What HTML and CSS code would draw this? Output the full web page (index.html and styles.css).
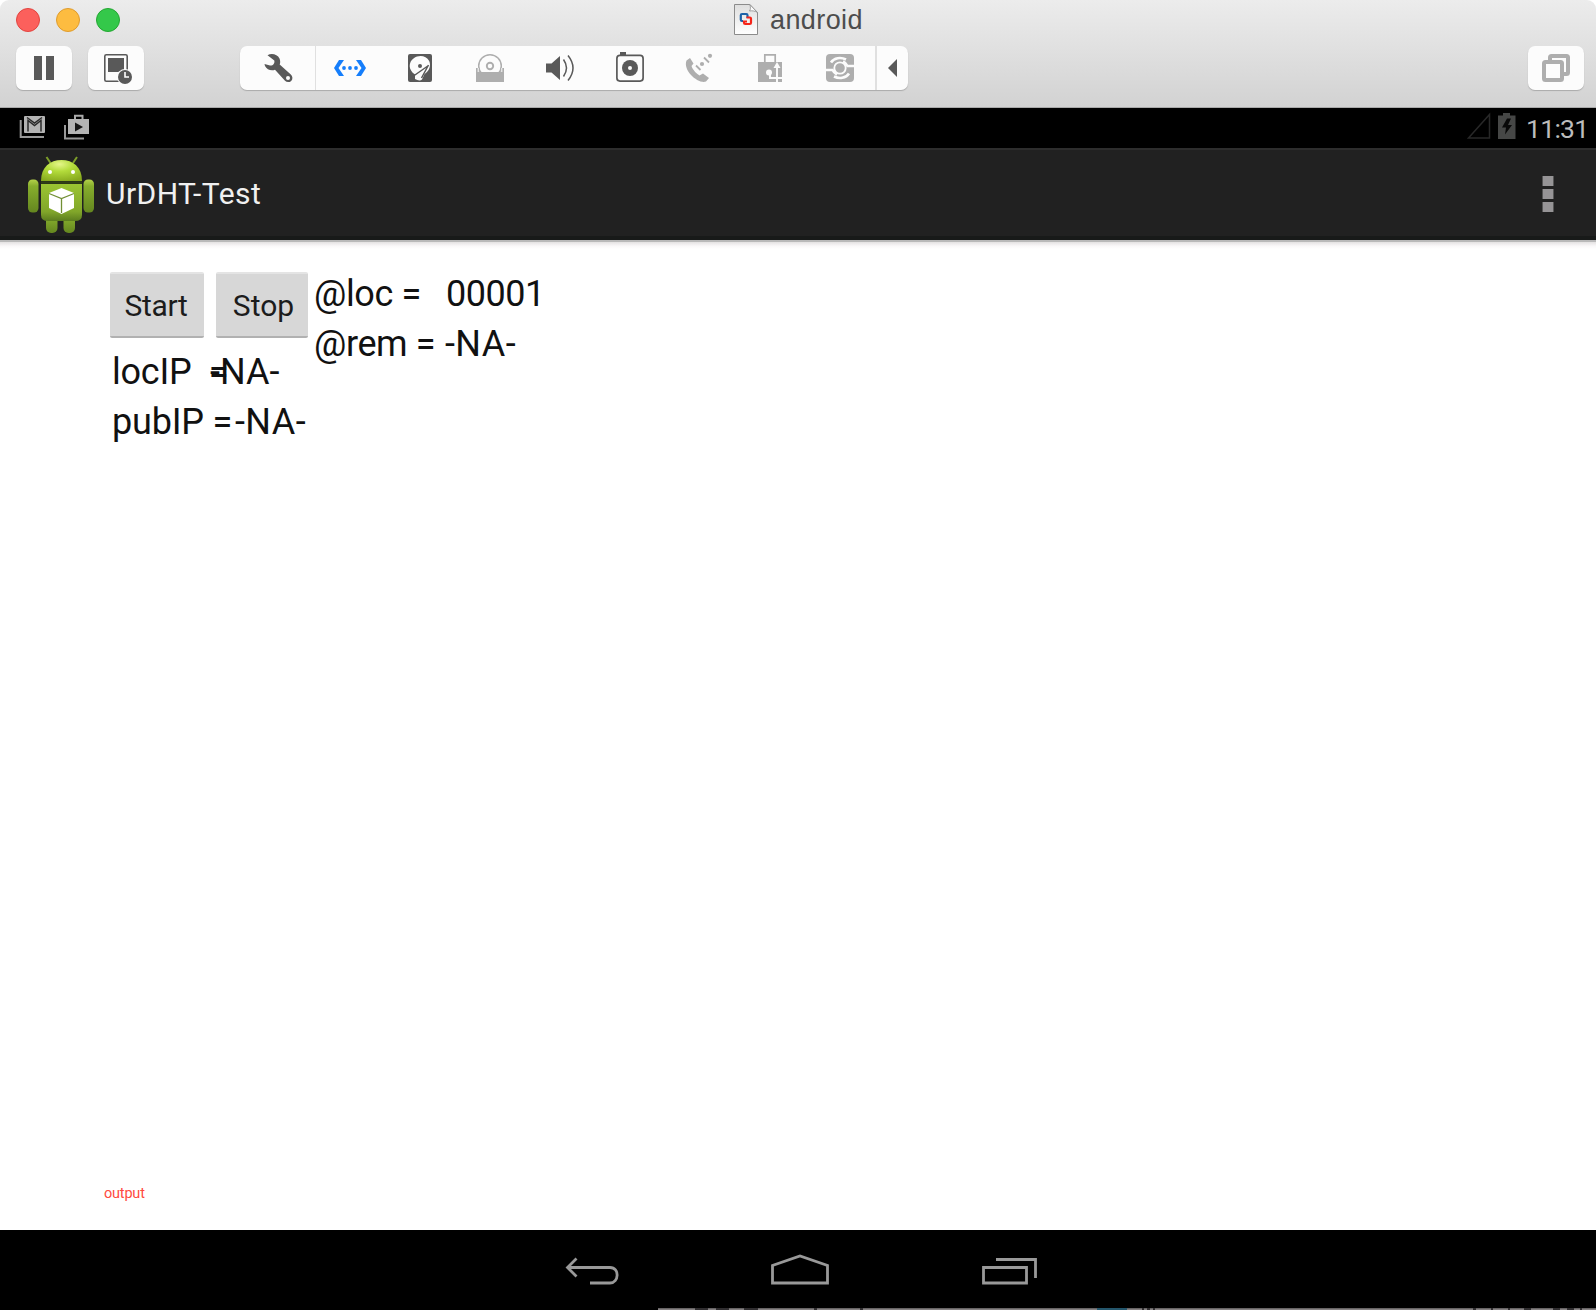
FILE: index.html
```
<!DOCTYPE html>
<html lang="en">
<head>
<meta charset="utf-8">
<title>android</title>
<link rel="stylesheet" href="styles.css">
</head>
<body>
<div class="window">
  <header class="chrome">
    <div class="titlebar">
      <div class="lights"><span class="light close"></span><span class="light minimize"></span><span class="light expand"></span></div>
      <div class="title">
        <svg class="doc" viewBox="0 0 24 31" width="24" height="31">
          <defs><linearGradient id="paper" x1="0" y1="0" x2="0" y2="1"><stop offset="0" stop-color="#dedede"/><stop offset="1" stop-color="#fff"/></linearGradient></defs>
          <path d="M.5.5h15.3l7.700 8v22H.5z" fill="url(#paper)" stroke="#8b8b8b"/>
          <path d="M15.800.5c1 3 .7 5-.3 6.500c3-.5 5.500 0 8 1.500z" fill="#fafafa" stroke="#8b8b8b" stroke-width=".8"/>
          <path d="M9 17H8q-1.200 0-1.200-1.200v-4.600Q6.800 10 8 10h4.300q1.200 0 1.200 1.200V14" fill="none" stroke="#1c62a8" stroke-width="2.200"/>
          <path d="M12.500 13.500h3.300q1.200 0 1.200 1.200v4.100q0 1.200-1.200 1.200h-4.600q-1.200 0-1.200-1.200V17.500H13" fill="none" stroke="#f52419" stroke-width="2.200"/>
        </svg>
        <span>android</span>
      </div>
    </div>
    <div class="toolbar">
      <div class="tool">
        <svg viewBox="-18 -18 36 36"><path d="M-10-12h8v24h-8zM2-12h8v24H2z"/></svg>
      </div>
      <div class="tool">
        <svg viewBox="-18 -18 36 36"><rect x="-11.200" y="-13.200" width="22.400" height="26.400" rx="1.500" fill="none" stroke="#595959" stroke-width="1.600"/><path d="M-8-10H8V4H-8z"/><circle cx="9" cy="9" r="8" fill="#fcfcfc"/><circle cx="9" cy="9" r="7"/><path d="M9 4v5h4" fill="none" stroke="#fff" stroke-width="1.600"/></svg>
      </div>
      <div class="group">
        <div class="cell first">
          <svg viewBox="-18 -18 36 36"><path d="M-10.500-12.800C-6.500-15.300-.500-13.800 1.500-9.500c1 2.500.8 4.500.2 6L12.800 6.500c2 2 2.200 4.800.4 6.400s-4.500 1.600-6.200-.1L-3 1.700C-6.800 3.300-11.200 1.500-13-2l-.5-2 5.500 1.500c3 .3 5-2 4.300-5z"/><circle cx="10" cy="10" r="2" fill="#fcfcfc"/></svg>
        </div>
        <div class="cell">
          <svg viewBox="-18 -18 36 36" class="blue"><path d="M-11-8h5l-5.500 8 5.500 8h-5l-5-8zM11-8H6l5.500 8L6 8h5l5-8z"/><circle cx="-6" r="1.900"/><circle r="1.900"/><circle cx="6" r="1.900"/></svg>
        </div>
        <div class="cell">
          <svg viewBox="-18 -18 36 36"><rect x="-12" y="-14" width="24" height="28" rx="2"/><path d="M-5 6.500C-12 2-11.500-6-6.500-9.500C-1-13.500 6-12.500 9.200-7C11.200-2.500 9.500 3 4.500 6L2 11.500C.5 13-2.500 12.500-5 11z" fill="#fcfcfc"/><circle cx="0" cy="-2" r="2"/><path d="M-6.500 8L8.500-2.500M8.500-3L1.500 10" fill="none" stroke="#595959" stroke-width="1.500"/></svg>
        </div>
        <div class="cell off">
          <svg viewBox="-18 -18 36 36"><circle cy="-2" r="11.300" fill="#fcfcfc" stroke="#aeaeae" stroke-width="1.500"/><circle cy="-2" r="3.200" fill="none" stroke="#aeaeae" stroke-width="1.900"/><path d="M-14 0h3.500v4h21V0H14v14h-28z"/><path d="M-11.800 0v4M11.800 0v4" stroke="#fcfcfc"/></svg>
        </div>
        <div class="cell">
          <svg viewBox="-18 -18 36 36"><path d="M-14-4.500h5.500L0-12v24l-8.500-7.500H-14z"/><path d="M3.500-8.500q6 8.500 0 17M8-12.500q10 12.500 0 25" fill="none" stroke="#595959" stroke-width="1.500"/></svg>
        </div>
        <div class="cell">
          <svg viewBox="-18 -18 36 36"><rect x="-13.100" y="-12.600" width="26.200" height="25.700" rx="3" fill="none" stroke="#595959" stroke-width="1.700"/><path d="M-10-16h6v4h-6z"/><circle r="8"/><circle r="2" fill="#fcfcfc"/></svg>
        </div>
        <div class="cell off">
          <svg viewBox="-18 -18 36 36"><path d="M-10-10-6.500-4.500-8.500-2C-7 2.500-3 6-.500 7.500L3 5.500 9 10 6 13.500C-1 16.500-17.500 3-13.500-7.500z"/><circle cx="2" cy="-4" r="2.100"/><circle cx="10" cy="-12.200" r="2.100"/><path d="M-4-2.500l4.500 4.500M4-10.500l5 5" fill="none" stroke="#aeaeae" stroke-width="1.800"/></svg>
        </div>
        <div class="cell off">
          <svg viewBox="-18 -18 36 36"><path d="M-12-6h24V14h-24z"/><path d="M-5.200-5v-8.200H5.200V-5" fill="none" stroke="#aeaeae" stroke-width="1.700"/><circle cx="-1" cy="4.500" r="3" fill="#fcfcfc"/><path d="M-2 6h2v4h12M7 14V0" fill="none" stroke="#fcfcfc" stroke-width="1.900"/><path d="M3.500 0 7-6l3.500 6z" fill="#fcfcfc"/></svg>
        </div>
        <div class="cell off">
          <svg viewBox="-18 -18 36 36"><rect x="-14" y="-14" width="28" height="28" rx="4"/><path d="M-9-5.500C-6-10.500 1-11 6-8.500M9 5.500C6 10.500-1 11-6 8.500M-14 2h6.500Q-6 5-3 6.500M14-2H7.500Q6-5 3-6.500" fill="none" stroke="#fcfcfc" stroke-width="2.600"/><circle r="5.700" fill="#aeaeae" stroke="#fcfcfc" stroke-width="1.800"/></svg>
        </div>
        <div class="cell last">
          <svg viewBox="-18 -18 36 36"><path d="M4-9V9L-5 0z"/></svg>
        </div>
      </div>
      <div class="tool right off">
        <svg viewBox="-18 -18 36 36"><g fill="none" stroke="#aeaeae" stroke-width="4"><path d="M-6-7v-3.500q0-1.500 1.500-1.500H10.500q1.500 0 1.500 1.500V4.500Q12 6 10.500 6H7"/><rect x="-12" y="-6" width="18" height="18" rx="1.500"/></g></svg>
      </div>
    </div>
  </header>

  <div class="status">
    <svg width="28" height="24" viewBox="18 115 28 24"><path d="M20.700 120v17H44" fill="none" stroke="#999" stroke-width="2"/><rect x="24" y="116" width="21" height="17" rx="1" fill="#b4b4b4"/><path d="M28 131.500v-11l6.500 5 6.500-5v11M27 117.500l7.500 5.500 7.500-5.500" fill="none" stroke="#2a2a2a" stroke-width="1.500"/></svg>
    <svg class="store" width="28" height="26" viewBox="62 114 28 26"><path d="M65 125v13.500h19" fill="none" stroke="#999" stroke-width="2"/><path d="M68 119h21v15H68z" fill="#b4b4b4"/><path d="M75 119v-3.200h7.500v3.200" fill="none" stroke="#aaa" stroke-width="2"/><path d="M75 122.500v9l8-4.500z" fill="#161616"/></svg>
    <svg class="signal" width="24" height="28" viewBox="1467 112 24 28"><path d="M1468.500 138 1489.500 114.500V138z" fill="none" stroke="#282828" stroke-width="1.500"/></svg>
    <svg class="battery" width="18" height="26" viewBox="1498 112 18 26"><path d="M1498 114.500h5V112h7v2.500h5.500V138H1498z" fill="#464746"/><path d="M1507 117.500l-5 9h4l-1 7 7-9.500h-4l3-6.500z" fill="#090909"/></svg>
    <span class="clock">11:31</span>
  </div>

  <div class="actionbar">
    <svg class="robot" width="68" height="80" viewBox="27 155 68 80">
      <defs>
        <radialGradient id="head" cx=".45" cy=".2" r=".85"><stop offset="0" stop-color="#e5f68a"/><stop offset=".4" stop-color="#b3dc3b"/><stop offset="1" stop-color="#87a91e"/></radialGradient>
        <linearGradient id="body" x1="0" y1="0" x2="0" y2="1"><stop offset="0" stop-color="#9bc532"/><stop offset=".75" stop-color="#81a62a"/><stop offset="1" stop-color="#5b7c1e"/></linearGradient>
        <linearGradient id="limb" x1="0" y1="0" x2="0" y2="1"><stop offset="0" stop-color="#b4d24a"/><stop offset=".2" stop-color="#87ae2d"/><stop offset="1" stop-color="#64861f"/></linearGradient>
      </defs>
      <path d="M46.500 157l4 6M77 157l-4 6" stroke="#7d9e29" stroke-width="2"/>
      <rect x="28" y="179.500" width="10.500" height="33" rx="4.500" fill="url(#limb)"/>
      <rect x="83.500" y="179.500" width="10.500" height="33" rx="4.500" fill="url(#limb)"/>
      <rect x="46" y="213" width="11.500" height="20" rx="5" fill="url(#limb)"/>
      <rect x="63.500" y="213" width="11.500" height="20" rx="5" fill="url(#limb)"/>
      <path d="M41 181C41 167 50 160 61.500 160S82 167 82 181z" fill="url(#head)"/>
      <path d="M41 184h41v31q0 6-7 6H48q-7 0-7-6z" fill="url(#body)"/>
      <path d="M41 182.500h41" stroke="#303f16" stroke-width="2.500"/>
      <circle cx="50" cy="172" r="2" fill="#fff"/><circle cx="73" cy="172" r="2" fill="#fff"/>
      <path d="M61.500 188l12.500 5v15l-12.500 6-12.500-6v-15z" fill="#fff"/>
      <path d="M49 193.500l12.500 5 12.500-5M61.500 198.500V213" fill="none" stroke="#718f34" stroke-width="1.300"/>
    </svg>
    <span class="appname">UrDHT-Test</span>
    <div class="overflow"><i></i><i></i><i></i></div>
  </div>

  <main class="content">
    <div class="top">
      <div class="left">
        <div class="buttons"><button class="btn start">Start</button><button class="btn stop">Stop</button></div>
        <div class="line"><span class="loc-key">locIP&nbsp; =</span><span class="loc-val">-NA-</span></div>
        <div class="line"><span class="key">pubIP =</span><span class="value">-NA-</span></div>
      </div>
      <div class="addresses">
        <div class="line"><span class="key">@loc =</span><span class="number">00001</span></div>
        <div class="line"><span class="key">@rem =</span><span class="value">-NA-</span></div>
      </div>
    </div>
    <div class="output">output</div>
  </main>

  <nav class="nav">
    <svg width="56" height="40" viewBox="565 1250 56 40"><path d="M567 1267.500h43c10 0 9 15.500 0 15.500h-20M576.500 1258.500l-9 9 9 9"/></svg>
    <svg width="62" height="40" viewBox="769 1250 62 40"><path d="M772.500 1283v-17.500l27.500-9.500 27.500 9.500V1283z"/></svg>
    <svg width="60" height="40" viewBox="980 1250 60 40"><path d="M983.500 1267.500h43V1283h-43zM996 1259.500h39.500V1278"/></svg>
  </nav>
  <svg class="strip" width="1596" height="2" viewBox="0 0 1596 2"><path d="M0 0h1596v2H0z" fill="#000"/><path d="M658 0h938v1H658z" fill="#676465"/><path d="M658 1h938v1H658z" fill="#858182"/><path d="M695 0h13v2h-13zM716 0h13v2h-13zM744 0h14v2h-14zM814 0h3v2h-3zM860 0h3v2h-3zM1142 0h2v2h-2zM1147 0h3v2h-3zM1153 0h2v2h-2zM1473 0h3v2h-3zM1491 0h2v2h-2zM1508 0h2v2h-2zM1524 0h7v2h-7zM1553 0h7v2h-7zM1567 0h7v2h-7zM1580 0h2v2h-2z" fill="#302e30"/><path d="M1097 0h30v2h-30z" fill="#24566c"/></svg>
</div>
</body>
</html>
```
FILE: styles.css
```
* { box-sizing: border-box; }
body { margin: 0; background: #fff; font-family: Roboto, "Liberation Sans", sans-serif; }
svg { display: block; flex: none; }
.window { width: 1596px; height: 1310px; overflow: hidden; display: flex; flex-direction: column; }

.chrome { height: 108px; flex: none; background: linear-gradient(#ececec, #d2d2d2); border-bottom: 1px solid #a9a9a9; border-radius: 9px 9px 0 0; }
.titlebar { height: 46px; display: flex; align-items: flex-start; }
.lights { display: flex; gap: 16px; padding: 8px 0 0 16px; width: 734px; }
.light { width: 24px; height: 24px; border-radius: 50%; border: 1px solid; }
.close { background: #fc605c; border-color: #e2443f; }
.minimize { background: #fdbc40; border-color: #df9c2e; }
.expand { background: #34c84a; border-color: #24a732; }
.title { display: flex; padding-top: 4px; gap: 12px; font: 27px/32px "Liberation Sans", sans-serif; letter-spacing: 0.4px; color: #4d4d4d; }

.toolbar { display: flex; height: 44px; padding: 0 12px 0 16px; }
.tool, .group { height: 44px; background: #fcfcfc; border-radius: 7px; box-shadow: 0 1px 1px #aaa; }
.tool { width: 56px; margin-right: 16px; display: flex; align-items: center; justify-content: center; }
.toolbar svg { width: 36px; height: 36px; fill: #595959; }
.toolbar .off svg { fill: #aeaeae; }
.toolbar .blue { fill: #157efb; }
.group { display: flex; width: 668px; margin-left: 80px; }
.cell { flex: none; width: 70px; display: flex; align-items: center; justify-content: center; }
.cell.first { width: 75px; box-shadow: 1px 0 #e0e0e0; }
.cell.last { width: 33px; border-left: 2px solid #e0e0e0; }
.cell.last svg { margin: 0 -3px; }
.tool.right { margin: 0 0 0 auto; }

.status { height: 40px; flex: none; background: #000; display: flex; align-items: flex-start; padding: 7px 8px 0 18px; color: #bcbcbc; }
.store { margin: -1px 0 0 16px; }
.signal { margin: -3px 0 0 auto; }
.battery { margin: -2px 0 0 7px; }
.clock { width: 61px; margin-left: 10px; margin-right: 1px; font-size: 26.500px; line-height: 27px; white-space: nowrap; letter-spacing: -0.7px; }

.actionbar { height: 92px; flex: none; background: #212121; border-top: 2px solid #2d2d2d; border-bottom: 4px solid #181a19; display: flex; align-items: center; padding: 2px 42px 0 27px; }
.robot { margin-top: 2px; }
.appname { margin: 0 0 0 11px; color: #f0f0f0; font-size: 30px; line-height: 36px; letter-spacing: 0.45px; }
.overflow { margin-left: auto; display: grid; gap: 3px; }
.overflow i { width: 12px; height: 10px; background: #969496; border: solid #555; border-width: 0 1.500px; }

.content { height: 990px; flex: none; background: linear-gradient(#b9b9b9 0 2px, #e4e2e2 2px, #faf8f9 6px, #fff 9px); padding: 32px 0 0 110px; display: flex; flex-direction: column; color: #111; }
.top { display: flex; }
.left { width: 205px; }
.buttons { display: flex; gap: 12px; height: 66px; margin-bottom: 9px; }
.btn { padding: 2px 0 0; border: 0; border-top: 2px solid #e4e4e4; border-bottom: 2px solid #b1b1b1; border-radius: 2px; background: #d7d7d7; font: 30px/60px Roboto, sans-serif; color: #1c1c1c; }
.start { width: 94px; letter-spacing: -0.3px; padding-right: 2px; }
.stop { width: 92px; padding-left: 3px; }
.line { height: 50px; display: flex; align-items: center; font-size: 36px; line-height: 50px; white-space: pre; }
.left .line { padding-left: 2px; }
.left .key { width: 123px; letter-spacing: -0.2px; }
.value { letter-spacing: 0.4px; }
.loc-key { width: 98px; letter-spacing: -0.25px; }
.addresses { margin-top: -3px; }
.addresses .key { width: 130px; letter-spacing: -0.4px; margin-left: -1px; }
.addresses .value { margin-left: 1px; }
.number { padding-left: 2px; letter-spacing: -0.5px; }
.output { margin: auto 0 28px -6px; font-size: 14.500px; line-height: 17px; letter-spacing: -0.2px; color: #ff4a40; }

.nav { height: 78px; flex: none; background: #000; display: flex; align-items: flex-start; padding: 20px 0 0 565px; }
.nav svg { fill: none; stroke: #999; stroke-width: 2.800; }
.nav svg:nth-child(2) { margin-left: 148px; }
.nav svg:nth-child(3) { margin-left: 149px; }
.strip { flex: none; }
```
